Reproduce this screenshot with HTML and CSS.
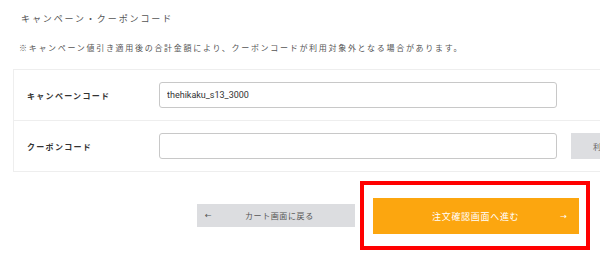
FILE: index.html
```html
<!DOCTYPE html>
<html lang="ja">
<head>
  <meta charset="UTF-8">
  <title>キャンペーン・クーポンコード</title>
  <link rel="stylesheet" href="styles.css">
</head>
<body>
  <div class="coupon">
    <h3 class="coupon-title">キャンペーン・クーポンコード</h3>
    <p class="coupon-note">※キャンペーン値引き適用後の合計金額により、クーポンコードが利用対象外となる場合があります。</p>

    <div class="coupon-panel">
      <div class="coupon-row">
        <label class="coupon-label" for="campaign">キャンペーンコード</label>
        <input id="campaign" class="coupon-input" type="text" value="thehikaku_s13_3000">
      </div>
      <div class="coupon-row">
        <label class="coupon-label" for="couponcode">クーポンコード</label>
        <input id="couponcode" class="coupon-input" type="text">
        <button class="coupon-apply">利用</button>
      </div>
    </div>

    <div class="actions">
      <button class="btn-back"><span class="arrow">&larr;</span><span class="btn-text">カート画面に戻る</span></button>
      <div class="highlight">
        <button class="btn-next"><span class="btn-text">注文確認画面へ進む</span><span class="arrow">&rarr;</span></button>
      </div>
    </div>
  </div>
</body>
</html>
```

FILE: styles.css
```css
/* Basic Style */
body {
  margin: 0;
  background: #fff;
  color: #444;
  font-family: 'Noto Sans CJK JP', 'Noto Sans', sans-serif;
  overflow: hidden;
}
.coupon {
  width: 600px;
}
button {
  border: 0;
  font-family: 'Noto Sans CJK JP', 'Noto Sans', sans-serif;
  cursor: pointer;
  padding: 0;
}

/* Heading */
.coupon-title {
  margin: 0;
  padding: 10px 0 0 21px;
  height: 18px;
  line-height: 18px;
  font-size: 9px;
  font-weight: 400;
  letter-spacing: 1.9px;
  color: #555;
}
.coupon-note {
  margin: 0;
  padding: 12px 0 0 19px;
  height: 16px;
  line-height: 16px;
  font-size: 8px;
  letter-spacing: 1.7px;
  color: #555;
}

/* Code rows */
.coupon-panel {
  margin: 13px 0 0 13px;
  width: 700px;
  border-top: 1px solid #eee;
  border-left: 1px solid #eee;
}
.coupon-row {
  display: flex;
  align-items: center;
  height: 50px;
  border-bottom: 1px solid #eee;
}
.coupon-label {
  flex: none;
  width: 132px;
  padding-left: 13px;
  font-size: 8px;
  font-weight: 700;
  letter-spacing: 1.3px;
  color: #333;
}
.coupon-input {
  flex: none;
  box-sizing: border-box;
  width: 398px;
  height: 26px;
  margin: 0;
  padding: 0 7px;
  border: 1px solid #c8c8c8;
  border-radius: 3px;
  font-family: 'Roboto', sans-serif;
  font-size: 9px;
  color: #333;
  outline: none;
}
.coupon-apply {
  flex: none;
  width: 70px;
  height: 26px;
  margin-left: 14px;
  padding-left: 22px;
  text-align: left;
  background: #dddee1;
  color: #666;
  font-size: 8px;
}

/* Buttons */
.actions {
  display: flex;
  align-items: center;
  padding: 9px 0 0 197px;
}
.btn-back,
.btn-next {
  display: flex;
  align-items: center;
  box-sizing: border-box;
}
.btn-back {
  width: 158px;
  height: 23px;
  padding: 0 8px;
  background: #dcdde0;
  color: #555;
  font-size: 8px;
}
.btn-back .btn-text {
  flex: 1;
  text-align: center;
  letter-spacing: 0.6px;
}
.btn-next {
  width: 206px;
  height: 36px;
  padding: 0 12px 0 0;
  background: #fca60f;
  color: #fff;
  font-size: 9px;
}
.btn-next .btn-text {
  flex: 1;
  text-align: center;
  letter-spacing: 0.7px;
  padding-left: 18px;
}
.arrow {
  font-family: 'DejaVu Sans', sans-serif;
  font-size: 8px;
}

/* Highlight frame */
.highlight {
  margin-left: 5px;
  padding: 13px 7px 12px 9px;
  border: 4px solid #f00;
}
```
